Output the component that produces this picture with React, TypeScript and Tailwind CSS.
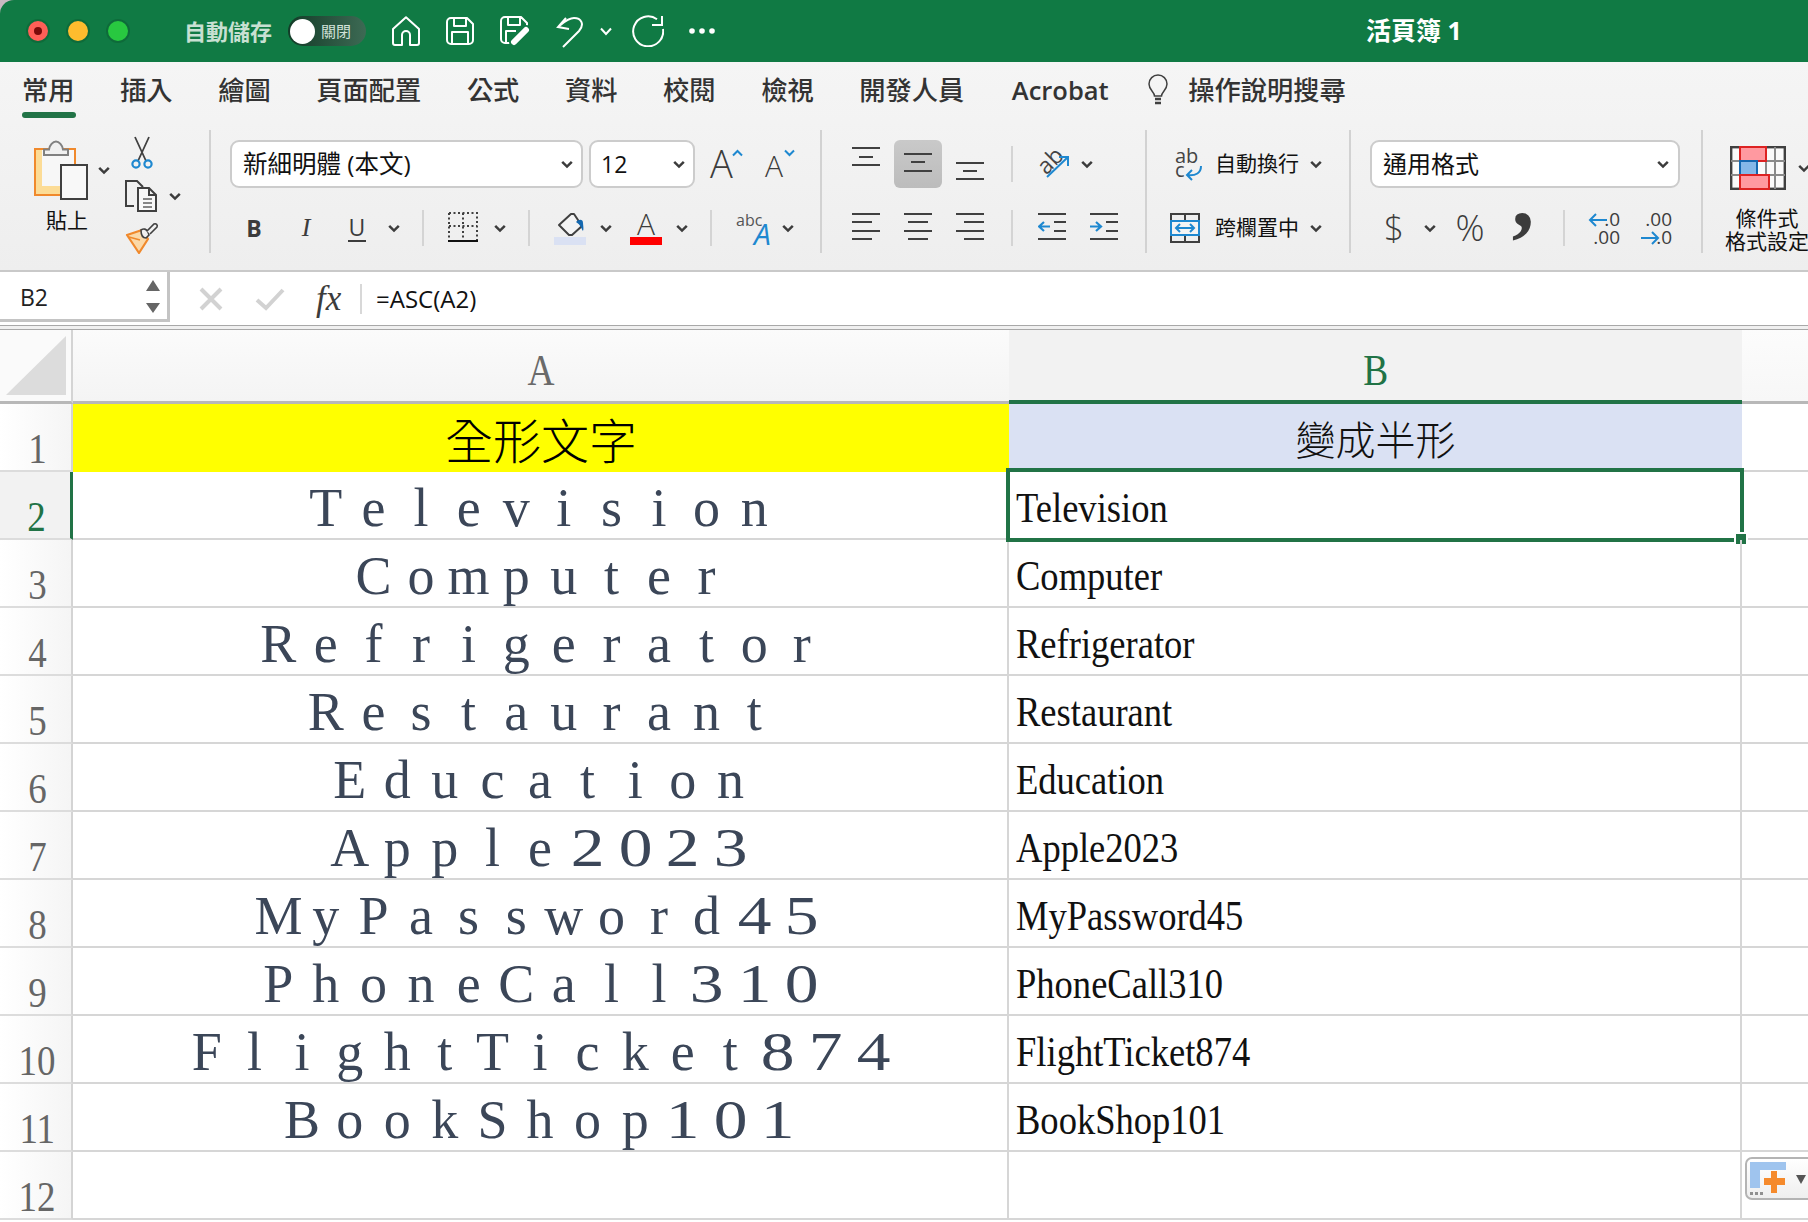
import React from "react";

const Chev = ({ className = "", w = 12 }: { className?: string; w?: number }) => (
  <svg width={w} height="9" viewBox="0 0 12 9" className={`shrink-0 ${className}`}>
    <path d="M1.2 1.8 6 6.6 10.8 1.8" fill="none" stroke="#3c3c3c" strokeWidth="2.5" />
  </svg>
);

const Sep = ({ className = "" }: { className?: string }) => <div className={`w-[2px] h-[36px] shrink-0 bg-[#d4d4d4] ${className}`} />;
const GroupSep = () => <div className="w-[2px] h-[123px] mt-[8px] shrink-0 bg-[#d2d2d2]" />;

const Lines = ({ rows, h = 36, className = "" }: { rows: [number, number, number][]; h?: number; className?: string }) => (
  <svg width="28" height={h} viewBox={`0 0 28 ${h}`} className={`shrink-0 ${className}`}>
    {rows.map(([a, b, y], i) => (
      <line key={i} x1={a} x2={b} y1={y} y2={y} stroke="#404040" strokeWidth="2" />
    ))}
  </svg>
);

const Home = () => (
  <svg width="28" height="30" viewBox="0 0 28 30" className="shrink-0">
    <path d="M14 1.2 27 13v14a2 2 0 0 1-2 2h-7V19a4 4 0 0 0-8 0v10H3a2 2 0 0 1-2-2V13Z" fill="none" stroke="#fff" strokeWidth="2" strokeLinejoin="round" />
  </svg>
);
const Save = () => (
  <svg width="28" height="28" viewBox="0 0 28 28" className="shrink-0">
    <path d="M5 1h16l6 6v16a4 4 0 0 1-4 4H5a4 4 0 0 1-4-4V5a4 4 0 0 1 4-4Z M8 1v8h12V1 M6 27V15h16v12" fill="none" stroke="#fff" strokeWidth="2" strokeLinejoin="round" />
  </svg>
);
const SaveEdit = () => (
  <svg width="30" height="30" viewBox="0 0 30 30" className="shrink-0">
    <path d="M12 27H5a4 4 0 0 1-4-4V5a4 4 0 0 1 4-4h16l6 6v4 M8 1v8h12V1 M6 27V15h10" fill="none" stroke="#fff" strokeWidth="2" strokeLinejoin="round" />
    <path d="M14 26 26 14" stroke="#107a44" strokeWidth="10" strokeLinecap="round" />
    <path d="M14 26 26 14" stroke="#fff" strokeWidth="6" strokeLinecap="round" />
  </svg>
);
const Undo = () => (
  <svg width="28" height="34" viewBox="0 0 28 34" className="shrink-0">
    <path d="M8 32 24 16C30 9 26 3 19 3 13 3 8 8 3 12M11 3 3 12l11 2" fill="none" stroke="#fff" strokeWidth="2" />
  </svg>
);
const Redo = () => (
  <svg width="32" height="32" viewBox="0 0 32 32" className="shrink-0">
    <path d="M25 4.2A15 15 0 1 0 31 14M30 1v9H20" fill="none" stroke="#fff" strokeWidth="2" />
  </svg>
);
const Dots = () => (
  <svg width="26" height="8" viewBox="0 0 26 8" className="shrink-0">
    <circle cx="3" cy="4" r="2.8" fill="#fff" />
    <circle cx="13" cy="4" r="2.8" fill="#fff" />
    <circle cx="23" cy="4" r="2.8" fill="#fff" />
  </svg>
);

const Paste = () => (
  <svg width="54" height="60" viewBox="0 0 54 60" className="shrink-0">
    <rect x="1" y="9" width="40" height="46" fill="#fcdc96" stroke="#f0892c" strokeWidth="2" />
    <rect x="8" y="10" width="32" height="36" fill="#f7f7f7" />
    <path d="M10 15V9.5h5C15.5 5 19 1.5 22 1.5S28.500 5 29 9.500h5V15Z" fill="#f0f0f0" stroke="#808080" strokeWidth="2" />
    <rect x="27" y="25" width="26" height="34" fill="#f8f8f8" stroke="#404040" strokeWidth="2" />
  </svg>
);
const Cut = () => (
  <svg width="22" height="34" viewBox="0 0 22 34" className="shrink-0">
    <path d="M4 1 15 25M18 1 7 25" stroke="#404040" strokeWidth="1.8" fill="none" />
    <circle cx="5" cy="28" r="3.600" fill="none" stroke="#1e88d0" strokeWidth="2.200" />
    <circle cx="17" cy="28" r="3.600" fill="none" stroke="#1e88d0" strokeWidth="2.200" />
  </svg>
);
const Copy = () => (
  <svg width="32" height="32" viewBox="0 0 32 32" className="shrink-0">
    <path d="M9 26H1V1h11l6 6" fill="none" stroke="#404040" strokeWidth="2" />
    <path d="M13 8h11l7 7v16H13Z M24 8v7h7" fill="#f8f8f8" stroke="#404040" strokeWidth="2" />
    <path d="M18 19h9M18 23h9M18 27h9" stroke="#606060" strokeWidth="1.500" />
  </svg>
);
const Brush = () => (
  <svg width="34" height="32" viewBox="0 0 34 32" className="shrink-0">
    <path d="M2 13 17 8l6 9-9 14Z" fill="#fbd9a8" stroke="#f0892c" strokeWidth="2.200" strokeLinejoin="round" />
    <path d="M4 15l11 3" stroke="#f0892c" strokeWidth="1.500" />
    <path d="M16 8c3-2 5-1 7 2l1 3-3 3c-3 0-5-3-5-8Z" fill="#f0f0f0" stroke="#404040" strokeWidth="1.600" />
    <path d="M22 9 29 2c2-1 4 1 3 3l-7 7" fill="#f0f0f0" stroke="#404040" strokeWidth="1.600" />
  </svg>
);
const BorderIcon = () => (
  <svg width="30" height="32" viewBox="0 0 30 32" className="shrink-0">
    <path d="M1 1H29V28M1 1V28M15 1V28M1 14H29" fill="none" stroke="#404040" strokeWidth="2" strokeDasharray="2 2.500" />
    <rect x="0" y="28" width="30" height="2" fill="#111" />
  </svg>
);
const Fill = () => (
  <svg width="32" height="34" viewBox="0 0 32 34" className="shrink-0">
    <path d="M5 14 17 3h3l8 12-10 9h-3Z" fill="#f4f4f4" stroke="#404040" strokeWidth="2" strokeLinejoin="round" />
    <path d="M22 11c3-3 7-3 7 1 0 2 1 6 0 8-2-3-2-6-7-9Z" fill="#1468b0" />
    <rect x="0" y="26" width="32" height="8" fill="#dae1f3" />
  </svg>
);
const Merge = () => (
  <svg width="30" height="30" viewBox="0 0 30 30" className="shrink-0">
    <path d="M1 1H29V29H1ZM15 1V9M15 21V29" fill="none" stroke="#404040" strokeWidth="2" />
    <rect x="1" y="8" width="28" height="14" fill="#f4f4f4" stroke="#1e88d0" strokeWidth="2" />
    <path d="M6 15H24M10 11 6 15l4 4M20 11l4 4-4 4" fill="none" stroke="#1e88d0" strokeWidth="2" />
  </svg>
);
const CF = () => (
  <svg width="56" height="44" viewBox="0 0 56 44" className="shrink-0">
    <rect x="1.200" y="1.200" width="53.600" height="41.600" fill="#fafafa" stroke="#404040" strokeWidth="2.400" />
    <path d="M1 15H55M1 29H55M10 1V43M36 1V43M45 1V43" stroke="#8a8a8a" strokeWidth="2" />
    <rect x="10" y="1" width="26" height="14" fill="#ff99a0" stroke="#dd2222" strokeWidth="2" />
    <rect x="10" y="15" width="17" height="14" fill="#85b8e8" stroke="#1468b0" strokeWidth="2" />
    <rect x="10" y="29" width="29" height="14" fill="#ff99a0" stroke="#dd2222" strokeWidth="2" />
  </svg>
);
const Bulb = () => (
  <svg width="20" height="32" viewBox="0 0 20 32" className="shrink-0">
    <path d="M6.500 22c0-4-5.500-6-5.500-12a9 9 0 0 1 18 0c0 6-5.500 8-5.500 12Z" fill="none" stroke="#404040" strokeWidth="1.500" />
    <path d="M7 25h6M7 29h6" stroke="#404040" strokeWidth="2.500" />
  </svg>
);
const Arrow = ({ dir }: { dir: "in" | "out" }) => (
  <svg width="28" height="36" viewBox="0 0 28 36" className="shrink-0">
    <path d="M0 4H28M16 12H28M16 21H28M0 29H28" stroke="#404040" strokeWidth="2" />
    {dir === "out" ? (
      <path d="M12 16.500H1M6 12 1 16.500 6 21" fill="none" stroke="#1e88d0" strokeWidth="2.200" />
    ) : (
      <path d="M0 16.500H11M6 12l5 4.500L6 21" fill="none" stroke="#1e88d0" strokeWidth="2.200" />
    )}
  </svg>
);

const ASERIF = "font-['Liberation_Serif','Noto_Sans_CJK_TC',serif]";

const rows = ["Television", "Computer", "Refrigerator", "Restaurant", "Education", "Apple2023", "MyPassword45", "PhoneCall310", "FlightTicket874", "BookShop101"];
const tabs = ["插入", "繪圖", "頁面配置", "公式", "資料", "校閱", "檢視", "開發人員"];

const TitleBar = () => (
  <div className="h-[62px] bg-[#c9b9c1]">
    <div className="h-full flex items-center bg-[#107a44] rounded-tl-[14px] text-white">
      <div className="ml-[26px] w-[24px] h-[24px] rounded-full bg-[#ff5f57] border-2 border-[#0e6b3a] flex items-center justify-center">
        <div className="w-[8px] h-[8px] rounded-full bg-[#7a0a0a]" />
      </div>
      <div className="ml-[16px] w-[24px] h-[24px] rounded-full bg-[#febc2e] border-2 border-[#0e6b3a]" />
      <div className="ml-[16px] w-[24px] h-[24px] rounded-full bg-[#28c840] border-2 border-[#0e6b3a]" />
      <div className="ml-[54px] w-[88px] text-[22px] font-bold text-[#c8e0d2] whitespace-nowrap">自動儲存</div>
      <div className="ml-[16px] w-[78px] h-[30px] rounded-full bg-linear-to-r from-[#123c28] to-[#3d6a54] flex items-center pl-[2px]">
        <div className="w-[25px] h-[25px] rounded-full bg-white" />
        <div className="ml-[6px] text-[15px] text-[#d2e2d9] whitespace-nowrap">關閉</div>
      </div>
      <div className="ml-[26px]"><Home /></div>
      <div className="ml-[26px]"><Save /></div>
      <div className="ml-[26px]"><SaveEdit /></div>
      <div className="ml-[25px] mt-[2px]"><Undo /></div>
      <svg width="12" height="9" viewBox="0 0 12 9" className="ml-[17px] shrink-0"><path d="M1 1.500 6 7l5-5.500" fill="none" stroke="#fff" strokeWidth="2" /></svg>
      <div className="ml-[20px]"><Redo /></div>
      <div className="ml-[25px]"><Dots /></div>
      <div className="ml-[651px] text-[25px] font-bold whitespace-nowrap">活頁簿 1</div>
    </div>
  </div>
);

const TabRow = () => (
  <div className="h-[60px] pl-[22px] flex items-start pt-[9px] gap-[45.600px] text-[26.250px] leading-[38px] font-medium text-[#333]">
    <div className="w-[52.500px] flex flex-col items-start">
      <div className="whitespace-nowrap">常用</div>
      <div className="w-[54px] h-[6px] mt-[3px] rounded-full bg-[#217346] shrink-0" />
    </div>
    {tabs.map((t) => <div key={t}>{t}</div>)}
    <div className="ml-[2px] font-semibold text-[25.500px]">Acrobat</div>
    <div className="flex items-center -ml-[6px]">
      <Bulb />
      <div className="ml-[20px]">操作說明搜尋</div>
    </div>
  </div>
);

const Ribbon = () => (
  <div className="h-[150px] flex border-b-2 border-[#c9c9c9] text-[#111]">
    {/* clipboard */}
    <div className="w-[209px] shrink-0 flex pl-[34px] pt-[18px]">
      <div className="w-[54px] flex flex-col items-start">
        <Paste />
        <div className="mt-[7px] ml-[12px] text-[21px] leading-[26px] whitespace-nowrap">貼上</div>
      </div>
      <Chev className="ml-[10px] mt-[26px]" />
      <div className="ml-[15px] -mt-[4px] flex flex-col">
        <div className="ml-[6px]"><Cut /></div>
        <div className="mt-[10px] flex items-center">
          <Copy />
          <Chev className="ml-[12px]" />
        </div>
        <div className="mt-[10px]"><Brush /></div>
      </div>
    </div>
    <GroupSep />
    {/* font */}
    <div className="w-[609px] shrink-0 pt-[18px]">
      <div className="h-[48px] flex items-center">
        <div className="ml-[19px] w-[353px] h-[48px] bg-white border-2 border-[#cccccc] rounded-[9px] flex items-center pl-[11px] pr-[8px]">
          <span className="text-[24.500px] whitespace-nowrap">新細明體 (本文)</span>
          <Chev className="ml-auto" />
        </div>
        <div className="ml-[6px] w-[106px] h-[48px] bg-white border-2 border-[#cccccc] rounded-[9px] flex items-center pl-[10px] pr-[8px]">
          <span className="text-[23px]">12</span>
          <Chev className="ml-auto" />
        </div>
        <div className="ml-[15px] w-[32px] h-[40px] relative">
          <span className="absolute left-0 top-[-4px] text-[38px] leading-[46px] font-light text-[#3c3c3c]">A</span>
          <svg width="11" height="8" viewBox="0 0 11 8" className="absolute right-[-1px] top-[5px]"><path d="M1 6.500 5.500 2 10 6.500" fill="none" stroke="#1e88d0" strokeWidth="2" /></svg>
        </div>
        <div className="ml-[23px] w-[28px] h-[40px] relative">
          <span className="absolute left-0 top-[2px] text-[30px] leading-[40px] font-light text-[#3c3c3c]">A</span>
          <svg width="11" height="8" viewBox="0 0 11 8" className="absolute right-[-2px] top-[5px]"><path d="M1 1.500 5.500 6 10 1.500" fill="none" stroke="#1e88d0" strokeWidth="2" /></svg>
        </div>
      </div>
      <div className="h-[36px] mt-[22px] flex items-center text-[#3c3c3c]">
        <div className="ml-[28px] w-[30px] text-center text-[23px] font-bold leading-[36px]">B</div>
        <div className={`ml-[22px] w-[30px] text-center text-[26px] italic leading-[36px] ${ASERIF}`}>I</div>
        <div className="ml-[21px] w-[30px] flex flex-col items-center">
          <span className="text-[23px] leading-[26px]">U</span>
          <div className="w-[18px] h-[2px] bg-[#3c3c3c]" />
        </div>
        <Chev className="ml-[16px]" />
        <Sep className="ml-[22px]" />
        <div className="ml-[24px]"><BorderIcon /></div>
        <Chev className="ml-[16px]" />
        <Sep className="ml-[22px]" />
        <div className="ml-[24px]"><Fill /></div>
        <Chev className="ml-[14px]" />
        <div className="ml-[18px] w-[32px] flex flex-col items-center">
          <span className="text-[30px] leading-[26px] font-light">A</span>
          <div className="w-[32px] h-[8px] bg-[#ff0000]" />
        </div>
        <Chev className="ml-[14px]" />
        <Sep className="ml-[22px]" />
        <div className="ml-[24px] w-[36px] h-[36px] relative">
          <span className="absolute left-[0px] top-[0px] text-[16px] leading-[20px] text-[#555]">abc</span>
          <span className="absolute left-[18px] top-[7px] text-[30px] leading-[34px] italic text-[#1e88d0]">A</span>
        </div>
        <Chev className="ml-[10px]" />
      </div>
    </div>
    <GroupSep />
    {/* alignment */}
    <div className="w-[323px] shrink-0 pt-[18px]">
      <div className="h-[48px] flex items-center">
        <Lines className="ml-[30px]" h={48} rows={[[0, 28, 8], [7, 21, 17], [0, 28, 25]]} />
        <div className="ml-[14px] w-[48px] h-[48px] rounded-[6px] bg-linear-to-b from-[#c9c9c9] to-[#bcbcbc] flex items-center justify-center">
          <Lines h={48} rows={[[0, 28, 14], [7, 21, 22], [0, 28, 31]]} />
        </div>
        <Lines className="ml-[14px]" h={48} rows={[[0, 28, 23], [7, 21, 31], [0, 28, 39]]} />
        <Sep className="ml-[27px]" />
        <div className="ml-[23px] w-[34px] h-[48px] relative">
          <span className="absolute left-[0px] top-[8px] text-[23px] leading-[24px] -rotate-45 text-[#444]">ab</span>
          <svg width="34" height="48" viewBox="0 0 34 48" className="absolute inset-0"><path d="M11 37 32 17M23 17h9v9" fill="none" stroke="#1e88d0" strokeWidth="2" /></svg>
        </div>
        <Chev className="ml-[11px]" />
      </div>
      <div className="h-[36px] mt-[22px] flex items-center">
        <Lines className="ml-[30px]" rows={[[0, 28, 4], [0, 20, 12], [0, 28, 21], [0, 20, 29]]} />
        <Lines className="ml-[24px]" rows={[[0, 28, 4], [4, 24, 12], [0, 28, 21], [4, 24, 29]]} />
        <Lines className="ml-[24px]" rows={[[0, 28, 4], [8, 28, 12], [0, 28, 21], [8, 28, 29]]} />
        <Sep className="ml-[27px]" />
        <div className="ml-[25px]"><Arrow dir="out" /></div>
        <div className="ml-[24px]"><Arrow dir="in" /></div>
      </div>
    </div>
    <GroupSep />
    {/* wrap + merge */}
    <div className="w-[202px] shrink-0 pt-[18px]">
      <div className="h-[48px] flex items-center">
        <div className="ml-[28px] w-[28px] h-[48px] relative text-[#444]">
          <span className="absolute left-0 top-[6px] text-[20px] leading-[20px]">ab</span>
          <span className="absolute left-0 top-[20px] text-[20px] leading-[20px]">c</span>
          <svg width="28" height="48" viewBox="0 0 28 48" className="absolute inset-0"><path d="M26 26c0 7-5 10-14 9M17 30l-5 5 5 5" fill="none" stroke="#1e88d0" strokeWidth="2" /></svg>
        </div>
        <div className="ml-[12px] w-[84px] text-[21px] whitespace-nowrap">自動換行</div>
        <Chev className="ml-[11px]" />
      </div>
      <div className="h-[36px] mt-[22px] flex items-center">
        <div className="ml-[23px]"><Merge /></div>
        <div className="ml-[15px] w-[84px] text-[21px] whitespace-nowrap">跨欄置中</div>
        <Chev className="ml-[11px]" />
      </div>
    </div>
    <GroupSep />
    {/* number */}
    <div className="w-[350px] shrink-0 pt-[18px]">
      <div className="h-[48px] flex items-center">
        <div className="ml-[19px] w-[310px] h-[48px] bg-white border-2 border-[#cccccc] rounded-[9px] flex items-center pl-[11px] pr-[9px]">
          <span className="text-[24px] whitespace-nowrap">通用格式</span>
          <Chev className="ml-auto" />
        </div>
      </div>
      <div className="h-[36px] mt-[22px] flex items-center text-[#3c3c3c]">
        <div className="ml-[28px] w-[30px] text-center text-[35px] leading-[36px] font-light">$</div>
        <Chev className="ml-[15px]" />
        <div className="ml-[14px] w-[40px] text-center text-[36px] leading-[36px] font-light">%</div>
        <div className={`ml-[18px] w-[30px] h-[36px] text-center text-[90px] leading-[36px] font-bold -translate-y-[32px] ${ASERIF}`}>,</div>
        <Sep className="ml-[25px]" />
        <div className="ml-[23px] w-[32px] h-[36px] relative text-[19px] leading-[18px] text-right">
          <div>.0</div>
          <div>.00</div>
          <svg width="20" height="14" viewBox="0 0 20 14" className="absolute left-0 top-[3px]"><path d="M19 7H2M8 1 2 7l6 6" fill="none" stroke="#1e88d0" strokeWidth="2" /></svg>
        </div>
        <div className="ml-[20px] w-[32px] h-[36px] relative text-[19px] leading-[18px] text-right">
          <div>.00</div>
          <div>.0</div>
          <svg width="20" height="14" viewBox="0 0 20 14" className="absolute left-0 bottom-[1px]"><path d="M1 7H18M12 1l6 6-6 6" fill="none" stroke="#1e88d0" strokeWidth="2" /></svg>
        </div>
      </div>
    </div>
    <GroupSep />
    {/* conditional */}
    <div className="w-[103px] shrink-0 pt-[24px]">
      <div className="flex items-center pl-[27px]">
        <CF />
        <Chev className="ml-[12px] shrink-0" />
      </div>
      <div className="mt-[17px] w-[130px] -ml-[1px] text-center text-[21px] leading-[23px] whitespace-nowrap">
        <div>條件式</div>
        <div>格式設定</div>
      </div>
    </div>
  </div>
);

const FormulaBar = () => (
  <div>
    <div className="h-[53px] flex bg-white">
      <div className="w-[170px] h-[50px] shrink-0 border-r-[3px] border-b-[3px] border-[#c4c4c4] flex items-center pl-[20px] pr-[6px] text-[23px] text-[#222]">
        <span className="pt-[3px]">B2</span>
        <svg width="16" height="36" viewBox="0 0 16 36" className="ml-auto"><path d="M8 2 15 13H1ZM1 25H15L8 35Z" fill="#666" /></svg>
      </div>
      <div className="flex items-center">
        <svg width="24" height="24" viewBox="0 0 24 24" className="ml-[29px]"><path d="M2 2 22 22M22 2 2 22" stroke="#d2d2d2" strokeWidth="4" /></svg>
        <svg width="30" height="24" viewBox="0 0 30 24" className="ml-[32px]"><path d="M2 13 11 21 28 3" fill="none" stroke="#d2d2d2" strokeWidth="4" /></svg>
        <div className={`ml-[31px] w-[30px] text-[35px] leading-[40px] italic text-[#3c3c3c] ${ASERIF}`}>fx</div>
        <div className="ml-[14px] w-[2px] h-[30px] bg-[#d8d8d8]" />
        <div className="ml-[14px] text-[24px] text-[#111] whitespace-nowrap">=ASC(A2)</div>
      </div>
    </div>
    <div className="h-[5px] border-y border-[#a8a8a8] bg-[#f0f0f0]" />
  </div>
);

const RowHead = ({ n, active }: { n: number; active?: boolean }) => (
  <div className={`flex items-end justify-center pl-[3px] border-b-2 border-[#dcdcdc] ${active ? "bg-[#f2f2f2] border-r-[3px] border-r-[#217346] text-[#217346]" : "bg-linear-to-r from-white to-[#f5f5f5] border-r-2 border-r-[#d4d4d4] text-[#666]"}`}>
    <span className={`text-[42px] leading-[42px] scale-x-[0.88] ${ASERIF}`}>{n}</span>
  </div>
);

const Wide = ({ text }: { text: string }) => (
  <div className={`h-full pt-[5px] flex items-center justify-center text-[54px] leading-none text-[#3b4658] ${ASERIF}`}>
    {text.split("").map((c, i) => (
      <span key={i} className="w-[47.600px] text-center">
        {/[0-9]/.test(c) ? <span className="inline-block scale-x-[1.25]">{c}</span> : c}
      </span>
    ))}
  </div>
);

const Half = ({ text }: { text: string }) => (
  <div className={`h-full pl-[7px] pt-[5px] flex items-center text-[42px] leading-none text-[#111] ${ASERIF}`}>
    <span className="origin-left scale-x-[0.87] whitespace-nowrap">{text}</span>
  </div>
);

const Sheet = () => (
  <div className="relative grid grid-cols-[73px_936px_733px_66px] grid-rows-[74px_68px] auto-rows-[68.030px]">
    <div className="bg-[#fafafa] border-r-2 border-b-[3px] border-r-[#d4d4d4] border-b-[#b8b8b8] flex items-center justify-center">
      <svg width="60" height="59" viewBox="0 0 60 59"><path d="M60 0V59H0Z" fill="#dcdcdc" /></svg>
    </div>
    <div className="bg-linear-to-b from-[#fbfbfb] to-[#f4f4f4] border-b-[3px] border-[#b8b8b8] pt-[10px] flex items-center justify-center text-[#6a6a6a]">
      <span className={`text-[44px] leading-none scale-x-[0.85] ${ASERIF}`}>A</span>
    </div>
    <div className="bg-[#f2f2f2] border-b-[4px] border-[#217346] pt-[11px] flex items-center justify-center text-[#217346]">
      <span className={`text-[44px] leading-none scale-x-[0.85] ${ASERIF}`}>B</span>
    </div>
    <div className="bg-linear-to-b from-[#fcfcfc] to-[#f7f7f7] border-b-[3px] border-[#b8b8b8]" />

    <RowHead n={1} />
    <div className={`bg-[#ffff00] pt-[9px] flex items-center justify-center text-[48px] leading-none text-black font-light ${ASERIF}`}>全形文字</div>
    <div className={`bg-[#dae1f3] pt-[7px] flex items-center justify-center text-[40px] leading-none text-[#111] font-light ${ASERIF}`}>變成半形</div>
    <div className="border-b-2 border-[#d4d4d4]" />

    {rows.map((r, i) => (
      <React.Fragment key={r}>
        <RowHead n={i + 2} active={i === 0} />
        <div className="border-r-2 border-b-2 border-[#d6d6d6]"><Wide text={r} /></div>
        <div className="relative border-r-2 border-b-2 border-[#d6d6d6]">
          <Half text={r} />
          {i === 0 && (
            <>
              <div className="absolute -left-[3px] -top-[4px] -right-[4px] -bottom-[4px] border-[4px] border-[#217346]" />
              <div className="absolute -right-[8px] -bottom-[8px] w-[14px] h-[14px] bg-[#217346] border-2 border-white" />
            </>
          )}
        </div>
        <div className="border-b-2 border-[#d6d6d6]" />
      </React.Fragment>
    ))}

    <RowHead n={12} />
    <div className="border-r-2 border-b-2 border-[#d6d6d6]" />
    <div className="border-r-2 border-b-2 border-[#d6d6d6]" />
    <div className="border-b-2 border-[#d6d6d6]" />

    <div className="absolute left-[1745px] top-[827px] w-[80px] h-[43px] rounded-[7px] border-2 border-[#b4b4b4] bg-linear-to-b from-white to-[#efefef] flex pl-[3px] pt-[3px]">
      <svg width="68" height="34" viewBox="0 0 68 34">
        <path d="M0 0H36V8H10V26H0Z" fill="#9fc4ee" />
        <path d="M22 10h6v7h8v7h-8v8h-6v-8h-7v-7h7Z" fill="#f58a2c" transform="translate(-1 -1)" />
        <path d="M0 30h3v3H0zM5 30h3v3H5zM10 30h3v3h-3z" fill="#909090" />
        <path d="M46 13H56L51 22Z" fill="#555" />
      </svg>
    </div>
  </div>
);

export default function App() {
  return (
    <div className="w-[1808px] h-[1222px] overflow-hidden bg-white font-['Open_Sans','Noto_Sans_CJK_TC',sans-serif]">
      <TitleBar />
      <div className="bg-linear-to-b from-[#f5f5f5] to-[#eeeeee]">
        <TabRow />
        <Ribbon />
      </div>
      <FormulaBar />
      <Sheet />
    </div>
  );
}
